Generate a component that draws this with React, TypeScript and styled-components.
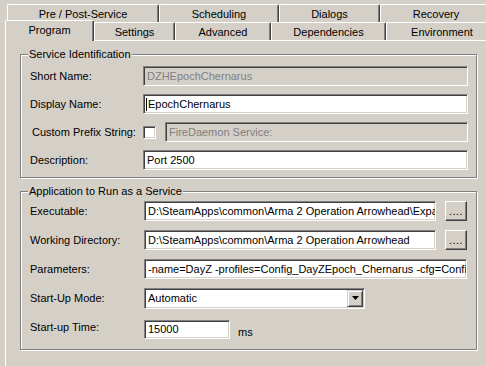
import styled, { createGlobalStyle } from "styled-components";

const GlobalStyle = createGlobalStyle`
  html, body {
    margin: 0;
    padding: 0;
    background: #d4d0c8;
  }
  body {
    font-family: "Liberation Sans", Arial, sans-serif;
    font-size: 11px;
    color: #000;
  }
`;

const Window = styled.div`
  width: 486px;
  height: 366px;
  overflow: hidden;
  background: #d4d0c8;
`;

// tab strip, two rows like the old win32 property sheets
const TabRow = styled.div<{ $back?: boolean }>`
  display: flex;
  align-items: flex-end;
  height: ${(p) => (p.$back ? 18 : 20)}px;
  padding-top: ${(p) => (p.$back ? 4 : 0)}px;
  padding-left: ${(p) => (p.$back ? 7 : 5)}px;
  margin-top: ${(p) => (p.$back ? 0 : -2)}px;
`;

const Tab = styled.div<{ $w: number; $active?: boolean }>`
  box-sizing: border-box;
  flex: none;
  width: ${(p) => p.$w}px;
  height: ${(p) => (p.$active ? 21 : 18)}px;
  margin-bottom: ${(p) => (p.$active ? -1 : 0)}px;
  position: ${(p) => (p.$active ? "relative" : "static")};
  z-index: ${(p) => (p.$active ? 1 : "auto")};
  border: 1px solid #fff;
  border-bottom: none;
  border-right-color: #404040;
  border-radius: 2px 2px 0 0;
  box-shadow: inset -1px 0 #808080;
  background: #d4d0c8;
  display: flex;
  align-items: center;
  justify-content: center;
  padding-bottom: ${(p) => (p.$active ? 2 : 0)}px;
  white-space: nowrap;
`;

const Panel = styled.div`
  margin-left: 5px;
  height: 400px;
  border-top: 1px solid #fff;
  border-left: 1px solid #fff;
  padding: 13px 0 0 14px;
`;

const Group = styled.div<{ $pr: number; $pb: number; $mb?: number }>`
  box-sizing: border-box;
  width: 457px;
  border: 1px solid #808080;
  box-shadow: inset 1px 1px #fff, 1px 1px #fff;
  padding: 0 ${(p) => p.$pr}px ${(p) => p.$pb}px 9px;
  margin-bottom: ${(p) => p.$mb ?? 0}px;
  display: flex;
  flex-direction: column;
`;

const Caption = styled.div`
  width: fit-content;
  margin: -7px 0 0 -2px;
  padding: 0 1px;
  line-height: 13px;
  background: #d4d0c8;
`;

const Form = styled.div<{ $label: number; $top: number; $gap: number }>`
  display: grid;
  grid-template-columns: ${(p) => p.$label}px minmax(0, 1fr);
  grid-auto-rows: 20px;
  row-gap: ${(p) => p.$gap}px;
  align-items: center;
  margin-top: ${(p) => p.$top}px;
`;

const Label = styled.div<{ $indent?: number }>`
  padding-left: ${(p) => p.$indent ?? 0}px;
  white-space: nowrap;
`;

const Line = styled.div<{ $shift?: number }>`
  display: flex;
  align-items: center;
  gap: 9px;
  min-width: 0;
  height: 100%;
  margin-top: ${(p) => p.$shift ?? 0}px;
`;

const Field = styled.div<{ $disabled?: boolean; $w?: number; $h?: number }>`
  box-sizing: border-box;
  position: relative;
  height: ${(p) => p.$h ?? 20}px;
  width: ${(p) => (p.$w ? `${p.$w}px` : "auto")};
  flex: ${(p) => (p.$w ? "none" : "1")};
  min-width: 0;
  border: 1px solid;
  border-color: #808080 #fff #fff #808080;
  box-shadow: inset 1px 1px #404040, inset -1px -1px #d4d0c8;
  background: ${(p) => (p.$disabled ? "#d4d0c8" : "#fff")};
  color: ${(p) => (p.$disabled ? "#808080" : "#000")};
  padding: 0 2px 0 3px;
  display: flex;
  align-items: center;
  white-space: nowrap;
  overflow: hidden;
`;

const Caret = styled.span`
  display: inline-block;
  flex: none;
  width: 1px;
  height: 13px;
  background: #000;
  margin: 0 1px 0 -1px;
`;

const Check = styled.div`
  box-sizing: border-box;
  flex: none;
  width: 13px;
  height: 13px;
  border: 1px solid;
  border-color: #808080 #fff #fff #808080;
  box-shadow: inset 1px 1px #404040, inset -1px -1px #d4d0c8;
  background: #fff;
`;

const Browse = styled.div`
  box-sizing: border-box;
  flex: none;
  width: 22px;
  height: 20px;
  border: 1px solid;
  border-color: #fff #404040 #404040 #fff;
  box-shadow: inset -1px -1px #808080;
  background: #d4d0c8;
  display: flex;
  align-items: center;
  justify-content: center;
  padding-bottom: 1px;
  letter-spacing: 0.5px;
`;

const DropButton = styled.div`
  box-sizing: border-box;
  position: absolute;
  right: 1px;
  top: 1px;
  width: 16px;
  height: 17px;
  border: 1px solid;
  border-color: #d4d0c8 #404040 #404040 #d4d0c8;
  box-shadow: inset 1px 1px #fff, inset -1px -1px #808080;
  background: #d4d0c8;
  display: flex;
  align-items: center;
  justify-content: center;
`;

const Unit = styled.span`
  align-self: flex-end;
  margin-left: -1px;
  line-height: 13px;
`;

const backTabs = [
  { label: "Pre / Post-Service", w: 152 },
  { label: "Scheduling", w: 120 },
  { label: "Dialogs", w: 101 },
  { label: "Recovery", w: 112 },
];

const frontTabs = [
  { label: "Program", w: 89 },
  { label: "Settings", w: 81 },
  { label: "Advanced", w: 96 },
  { label: "Dependencies", w: 115 },
  { label: "Environment", w: 112 },
];

export default function App() {
  return (
    <Window>
      <GlobalStyle />
      <TabRow $back>
        {backTabs.map((t) => (
          <Tab key={t.label} $w={t.w}>
            {t.label}
          </Tab>
        ))}
      </TabRow>
      <TabRow>
        {frontTabs.map((t, i) => (
          <Tab key={t.label} $w={t.w} $active={i === 0}>
            {t.label}
          </Tab>
        ))}
      </TabRow>
      <Panel>
        <Group $pr={8} $pb={7} $mb={13}>
          <Caption>Service Identification</Caption>
          <Form $label={113} $top={5} $gap={8}>
            <Label>Short Name:</Label>
            <Field $disabled>DZHEpochChernarus</Field>
            <Label>Display Name:</Label>
            <Field>
              <Caret />
              EpochChernarus
            </Field>
            <Label $indent={2}>Custom Prefix String:</Label>
            <Line>
              <Check />
              <Field $disabled>FireDaemon Service:</Field>
            </Line>
            <Label>Description:</Label>
            <Field>Port 2500</Field>
          </Form>
        </Group>
        <Group $pr={9} $pb={12}>
          <Caption>Application to Run as a Service</Caption>
          <Form $label={114} $top={3} $gap={9}>
            <Label>Executable:</Label>
            <Line>
              <Field>D:\SteamApps\common\Arma 2 Operation Arrowhead\Expan</Field>
              <Browse>....</Browse>
            </Line>
            <Label>Working Directory:</Label>
            <Line>
              <Field>D:\SteamApps\common\Arma 2 Operation Arrowhead</Field>
              <Browse>....</Browse>
            </Line>
            <Label>Parameters:</Label>
            <Field>-name=DayZ -profiles=Config_DayZEpoch_Chernarus -cfg=Config_</Field>
            <Label>Start-Up Mode:</Label>
            <Line>
              <Field $w={221} $h={21}>
                Automatic
                <DropButton>
                  <svg width="7" height="4" viewBox="0 0 7 4">
                    <path d="M0 0h7L3.5 4z" fill="#000" />
                  </svg>
                </DropButton>
              </Field>
            </Line>
            <Label>Start-up Time:</Label>
            <Line $shift={4}>
              <Field $w={86} $h={19}>15000</Field>
              <Unit>ms</Unit>
            </Line>
          </Form>
        </Group>
      </Panel>
    </Window>
  );
}
